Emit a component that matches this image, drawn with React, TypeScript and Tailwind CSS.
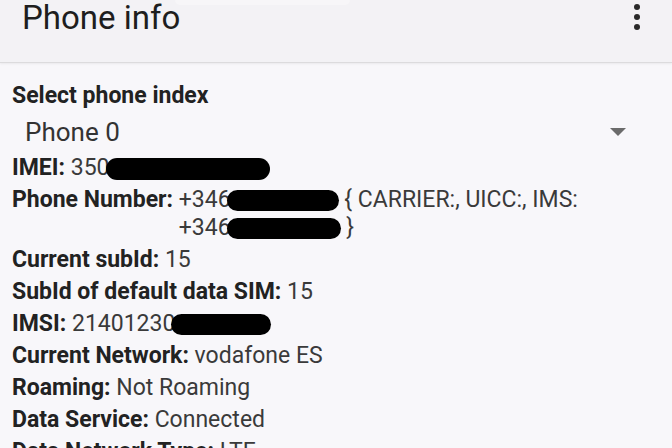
import React from "react";

function Redact({ w, className = "" }: { w: number; className?: string }) {
  return (
    <span
      className={`inline-block h-[21px] rounded-full bg-black align-middle ${className}`}
      style={{ width: w }}
    />
  );
}

function Row({ label, children }: { label: string; children: React.ReactNode }) {
  return (
    <div className="whitespace-nowrap py-[2px] leading-[28px]">
      <span className="font-bold text-[#222]">{label}:</span>{" "}
      <span className="text-[#3a3a3a]">{children}</span>
    </div>
  );
}

export default function App() {
  return (
    <div
      className="h-[448px] w-[672px] overflow-hidden bg-[#f8f7fa]"
      style={{ fontFamily: "Roboto, 'Noto Sans', sans-serif" }}
    >
      <header className="relative flex h-[63px] items-start justify-between border-b border-[#dcdbdd] bg-[#f3f2f5] pl-[22px] pr-[32px] shadow-[0_1px_2px_rgba(0,0,0,0.06)]">
        <div className="absolute left-[175px] top-0 h-[5px] w-[175px] rounded-b-lg bg-[#f7f6f8]" />
        <h1 className="text-[33px] leading-[36px] text-[#1e1e1e]">Phone info</h1>
        <div className="mt-[4px] flex flex-col items-center gap-[4px]">
          <span className="h-[6px] w-[6px] rounded-full bg-[#2a2a2a]" />
          <span className="h-[6px] w-[6px] rounded-full bg-[#2a2a2a]" />
          <span className="h-[6px] w-[6px] rounded-full bg-[#2a2a2a]" />
        </div>
      </header>

      <main className="px-3 pt-[17px] text-[23px]">
        <div className="py-[2px] font-bold leading-[28px] text-[#222]">Select phone index</div>
        <div className="flex h-[40px] items-center justify-between pl-[13px] pr-[34px]">
          <span className="text-[26px] text-[#333]">Phone 0</span>
          <svg width="16" height="8" viewBox="0 0 16 8">
            <path d="M0 0 H16 L8 8 Z" fill="#6b6b6b" />
          </svg>
        </div>

        <Row label="IMEI">
          350
          <Redact w={164} className="-ml-1 h-[22px]" />
        </Row>
        <div className="flex py-[2px] leading-[28px]">
          <span className="whitespace-pre font-bold text-[#222]">Phone Number: </span>
          <span className="text-[#3a3a3a]">
            +346
            <Redact w={112} className="-ml-1 h-[20px]" /> {"{"} CARRIER:, UICC:, IMS:
            <br />
            +346
            <Redact w={114} className="-ml-1 h-[20px]" /> {"}"}
          </span>
        </div>
        <Row label="Current subId">15</Row>
        <Row label="SubId of default data SIM">15</Row>
        <Row label="IMSI">
          21401230
          <Redact w={100} className="-ml-1 h-[20px]" />
        </Row>
        <Row label="Current Network">vodafone ES</Row>
        <Row label="Roaming">Not Roaming</Row>
        <Row label="Data Service">Connected</Row>
        <Row label="Data Network Type">LTE</Row>
      </main>
    </div>
  );
}
